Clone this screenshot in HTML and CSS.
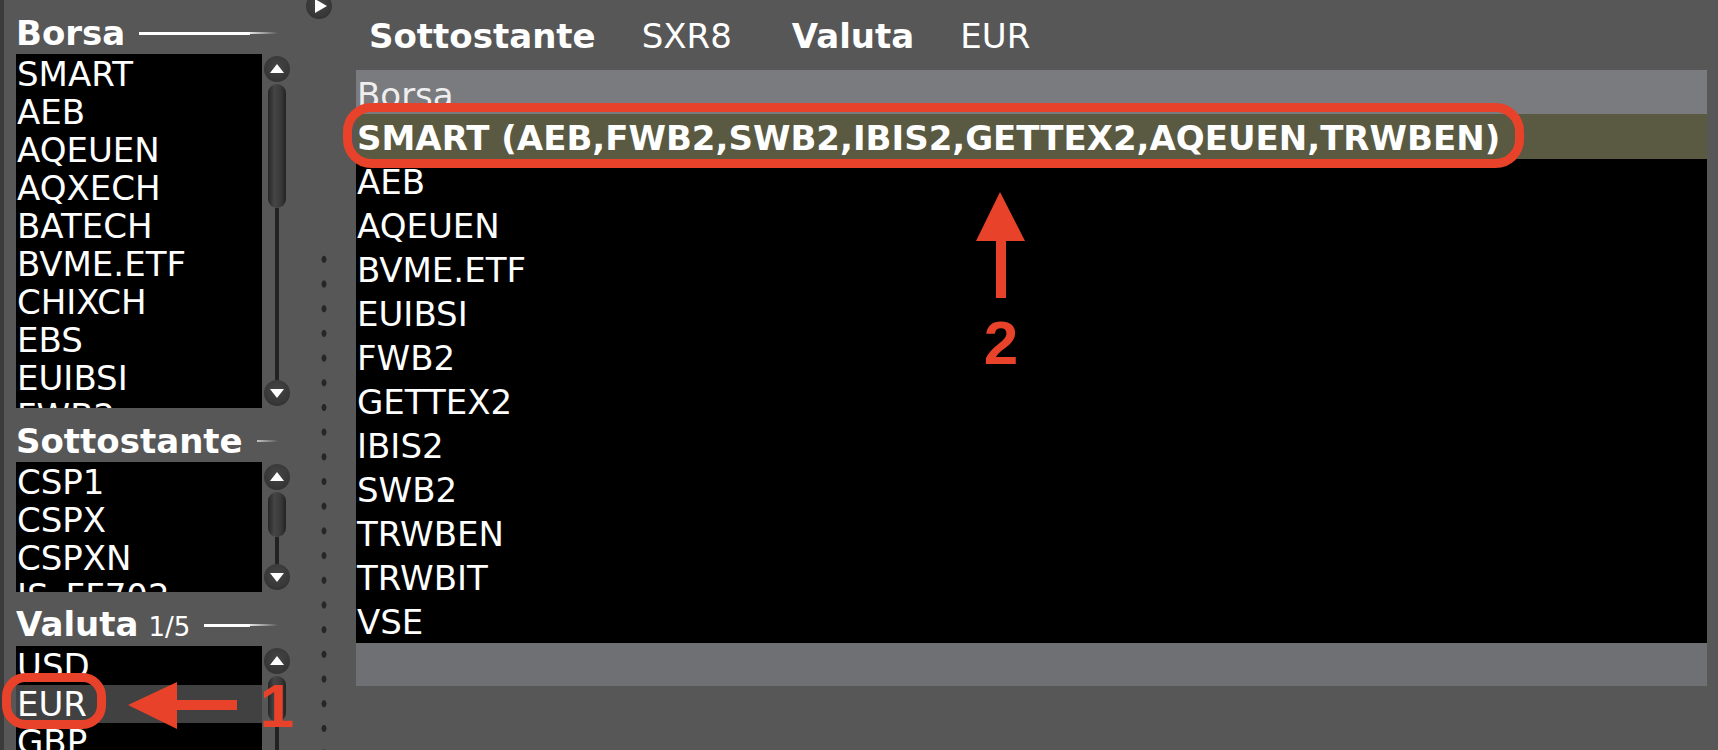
FILE: index.html
```html
<!DOCTYPE html>
<html lang="it">
<head>
<meta charset="utf-8">
<title>Borsa</title>
<link rel="stylesheet" href="styles.css">
</head>
<body>
<div class="app">
  <div class="edge"></div>
  <aside class="side">
    <section class="group">
      <div class="ghead"><span class="gtitle">Borsa</span><span class="gline"></span></div>
      <div class="gbody">
        <ul class="list list-borsa">
          <li>SMART</li><li>AEB</li><li>AQEUEN</li><li>AQXECH</li><li>BATECH</li><li>BVME.ETF</li><li>CHIXCH</li><li>EBS</li><li>EUIBSI</li><li>FWB2</li>
        </ul>
        <div class="sbar">
          <span class="sbtn"><svg viewBox="0 0 26 26" width="26" height="26"><polygon points="6,17 20,17 13,8" fill="#fff"/></svg></span>
          <span class="thumb thumb-borsa"></span>
          <span class="track"></span>
          <span class="sbtn"><svg viewBox="0 0 26 26" width="26" height="26"><polygon points="6,9 20,9 13,18" fill="#fff"/></svg></span>
        </div>
      </div>
    </section>
    <section class="group">
      <div class="ghead"><span class="gtitle">Sottostante</span><span class="gline"></span></div>
      <div class="gbody">
        <ul class="list list-sott">
          <li>CSP1</li><li>CSPX</li><li>CSPXN</li><li>IS_FF702</li>
        </ul>
        <div class="sbar">
          <span class="sbtn"><svg viewBox="0 0 26 26" width="26" height="26"><polygon points="6,17 20,17 13,8" fill="#fff"/></svg></span>
          <span class="thumb thumb-sott"></span>
          <span class="track"></span>
          <span class="sbtn"><svg viewBox="0 0 26 26" width="26" height="26"><polygon points="6,9 20,9 13,18" fill="#fff"/></svg></span>
        </div>
      </div>
    </section>
    <section class="group">
      <div class="ghead"><span class="gtitle">Valuta<span class="count">1/5</span></span><span class="gline"></span></div>
      <div class="gbody">
        <ul class="list list-val">
          <li>USD</li><li class="sel">EUR</li><li>GBP</li>
        </ul>
        <div class="sbar">
          <span class="sbtn"><svg viewBox="0 0 26 26" width="26" height="26"><polygon points="6,17 20,17 13,8" fill="#fff"/></svg></span>
          <span class="thumb thumb-val"></span>
          <span class="track"></span>
        </div>
      </div>
    </section>
  </aside>
  <div class="splitter">
    <span class="collapse"><svg viewBox="0 0 26 26" width="26" height="26"><polygon points="9,6 9,20 21,13" fill="#fff"/></svg></span>
    <div class="dots"></div>
  </div>
  <main class="main">
    <div class="summary">
      <span class="lbl">Sottostante</span><span class="val">SXR8</span>
      <span class="lbl">Valuta</span><span class="val">EUR</span>
    </div>
    <div class="table">
      <div class="thead">Borsa</div>
      <div class="row sel">SMART (AEB,FWB2,SWB2,IBIS2,GETTEX2,AQEUEN,TRWBEN)</div>
      <div class="row">AEB</div>
      <div class="row">AQEUEN</div>
      <div class="row">BVME.ETF</div>
      <div class="row">EUIBSI</div>
      <div class="row">FWB2</div>
      <div class="row">GETTEX2</div>
      <div class="row">IBIS2</div>
      <div class="row">SWB2</div>
      <div class="row">TRWBEN</div>
      <div class="row">TRWBIT</div>
      <div class="row">VSE</div>
      <div class="tfoot"></div>
    </div>
  </main>
</div>
<svg class="annot" viewBox="0 0 1718 750" width="1718" height="750">
  <rect x="347.5" y="107.5" width="1172" height="56" rx="24" ry="24" fill="none" stroke="#e8422a" stroke-width="9"/>
  <polygon points="1000,192 976,241 1025,241" fill="#e8422a"/>
  <rect x="996" y="240" width="10" height="58" fill="#e8422a"/>
  <text x="1001" y="364" class="num" text-anchor="middle">2</text>
  <rect x="6.5" y="677.5" width="95" height="47" rx="19" ry="19" fill="none" stroke="#e8422a" stroke-width="9"/>
  <polygon points="128,705 177,682 177,729" fill="#e8422a"/>
  <rect x="176" y="700" width="61" height="10" fill="#e8422a"/>
  <text x="277" y="727" class="num" text-anchor="middle">1</text>
</svg>
</body>
</html>
```

FILE: styles.css
```css
* { box-sizing: border-box; }
html, body {
  margin: 0;
  padding: 0;
}
body {
  width: 1718px;
  height: 750px;
  overflow: hidden;
  background: #575757;
  font-family: "DejaVu Sans", "Verdana", sans-serif;
  color: #fff;
  position: relative;
}
.app {
  display: flex;
  height: 750px;
}
.edge {
  width: 4px;
  flex: none;
  background: #3b3b3b;
}
.side {
  width: 292px;
  flex: none;
  padding-left: 12px;
  overflow: hidden;
}
.group {
  margin-top: 13px;
}
.ghead {
  height: 40px;
  display: flex;
  align-items: center;
  padding-right: 18px;
  margin-bottom: 1px;
}
.gtitle {
  font-weight: bold;
  font-size: 34px;
  line-height: 40px;
  white-space: nowrap;
}
.count {
  font-weight: normal;
  font-size: 26px;
  margin-left: 10px;
}
.gline {
  flex: 1;
  height: 4px;
  margin-left: 14px;
  background-image:
    linear-gradient(#fff, #fff),
    linear-gradient(to right, rgba(255,255,255,0.85), rgba(255,255,255,0));
  background-repeat: no-repeat;
  background-size: calc(100% - 28px) 3px, 28px 2px;
  background-position: left center, right center;
}
.gbody {
  display: flex;
}
.list {
  list-style: none;
  margin: 0;
  padding: 1px 0 0 1px;
  width: 246px;
  background: #000;
  overflow: hidden;
  font-size: 34px;
  line-height: 38px;
}
.list li {
  height: 38px;
  white-space: nowrap;
}
.list li.sel {
  background: #414141;
  margin-left: -1px;
  padding-left: 1px;
}
.list-borsa { height: 354px; }
.list-sott { height: 130px; }
.list-val { height: 140px; }
.sbar {
  width: 26px;
  margin-left: 2px;
  padding: 2px 0;
  display: flex;
  flex-direction: column;
  align-items: center;
}
.sbtn, .collapse {
  width: 26px;
  height: 26px;
  flex: none;
  border-radius: 50%;
  background: radial-gradient(circle at 50% 40%, #454545 0%, #383838 60%, #2a2a2a 100%);
  display: block;
}
.sbtn svg, .collapse svg { display: block; }
.thumb {
  width: 18px;
  margin-top: 2px;
  flex: none;
  border-radius: 9px;
  background: linear-gradient(to right, #262626 0%, #454545 35%, #3a3a3a 70%, #232323 100%);
}
.thumb-borsa { height: 124px; }
.thumb-sott { height: 45px; }
.thumb-val { height: 46px; }
.track {
  flex: 1;
  width: 4px;
  background: #222;
}
.splitter {
  width: 60px;
  flex: none;
  display: flex;
  flex-direction: column;
}
.collapse {
  margin-top: -7px;
  margin-left: 10px;
}
.dots {
  flex: 1;
  margin-top: 228px;
  background-image: radial-gradient(2.8px 3.8px at 28px 50%, #262626 80%, rgba(38,38,38,0) 100%);
  background-size: 100% 24.7px;
  background-repeat: repeat-y;
}
.main {
  flex: 1;
  padding: 16px 11px 0 0;
}
.summary {
  height: 40px;
  padding-left: 13px;
  display: flex;
  align-items: baseline;
  white-space: nowrap;
}
.summary .lbl {
  font-weight: bold;
  font-size: 34px;
  line-height: 40px;
  margin-right: 46px;
}
.summary .val {
  font-size: 34px;
  line-height: 40px;
  margin-right: 60px;
}
.table {
  margin-top: 14px;
  font-size: 34px;
}
.thead {
  height: 44px;
  padding: 6px 0 0 1px;
  line-height: 38px;
  background: #7a7b7f;
  color: #eeeeee;
}
.row {
  height: 44px;
  line-height: 46px;
  padding-left: 1px;
  background: #000;
  white-space: nowrap;
}
.row.sel {
  height: 45px;
  line-height: 48px;
  background: #5a5941;
  font-weight: bold;
}
.tfoot {
  height: 43px;
  background: #6f7073;
}
.annot {
  position: absolute;
  left: 0;
  top: 0;
  pointer-events: none;
}
.num {
  font-family: "Liberation Sans", Arial, sans-serif;
  font-weight: bold;
  font-size: 62px;
  fill: #e8422a;
}
```
